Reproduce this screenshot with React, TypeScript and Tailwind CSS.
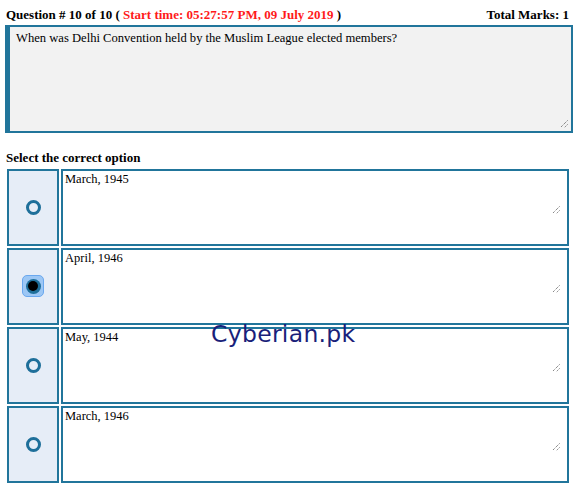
const options = ["March, 1945", "April, 1946", "May, 1944", "March, 1946"];

function Radio({ checked }: { checked: boolean }) {
  if (checked) {
    return (
      <div className="w-[22px] h-[22px] rounded-[5px] bg-[#9cc7f5] border border-[#6aa8ef] flex items-center justify-center">
        <div className="w-[15px] h-[15px] rounded-full bg-[#1e6f9a] flex items-center justify-center">
          <div className="w-[10px] h-[10px] rounded-full bg-black" />
        </div>
      </div>
    );
  }
  return <div className="w-[15px] h-[15px] rounded-full border-[3px] border-[#1e6f9a]" />;
}

function Grip({ className }: { className: string }) {
  return (
    <svg width="8" height="8" viewBox="0 0 8 8" className={"absolute " + className}>
      <path d="M7.5 0.5 L0.5 7.5 M7.5 4.5 L4.5 7.5" stroke="#555" strokeWidth="1" strokeDasharray="1 1" />
    </svg>
  );
}

export default function App() {
  return (
    <div className="relative w-[576px] h-[488px] bg-white font-['Liberation_Serif',serif] text-[13px] text-black">
      <div className="flex justify-between items-center px-[6px] pt-[5px] h-[24px] font-bold">
        <div>
          Question # 10 of 10 ({" "}
          <span className="text-[#ff1a1a]">Start time: 05:27:57 PM, 09 July 2019</span> )
        </div>
        <div className="pr-[1px]">Total Marks: 1</div>
      </div>

      <div className="relative ml-[5px] mr-[3px] mt-[1px] h-[108px] bg-[#f2f2f2] border-2 border-[#21759b] border-l-[5px] pl-[6px] pt-[2px] text-[12.6px]">
        When was Delhi Convention held by the Muslim League elected members?
        <Grip className="right-[3px] bottom-[3px]" />
      </div>

      <div className="px-[6px] pt-[15px] pb-[1px] font-bold">Select the correct option</div>

      <div className="flex flex-col gap-[2px] pl-[7px] w-[569px]">
        {options.map((opt, i) => (
          <div key={opt} className="flex gap-[2px] h-[77px]">
            <div className="w-[52px] bg-[#e6edf7] border-2 border-[#21759b] flex items-center justify-center">
              <Radio checked={i === 1} />
            </div>
            <div className="relative flex-1 border-2 border-[#21759b] pl-[2px] text-[12.5px] leading-[16px]">
              {opt}
              <Grip className="right-[7px] bottom-[30px]" />
            </div>
          </div>
        ))}
      </div>

      <div className="absolute left-[211px] top-[317px] font-['DejaVu_Sans',sans-serif] text-[23.5px] text-[#1a1f7a] tracking-[0.3px]">
        Cyberian.pk
      </div>
    </div>
  );
}
